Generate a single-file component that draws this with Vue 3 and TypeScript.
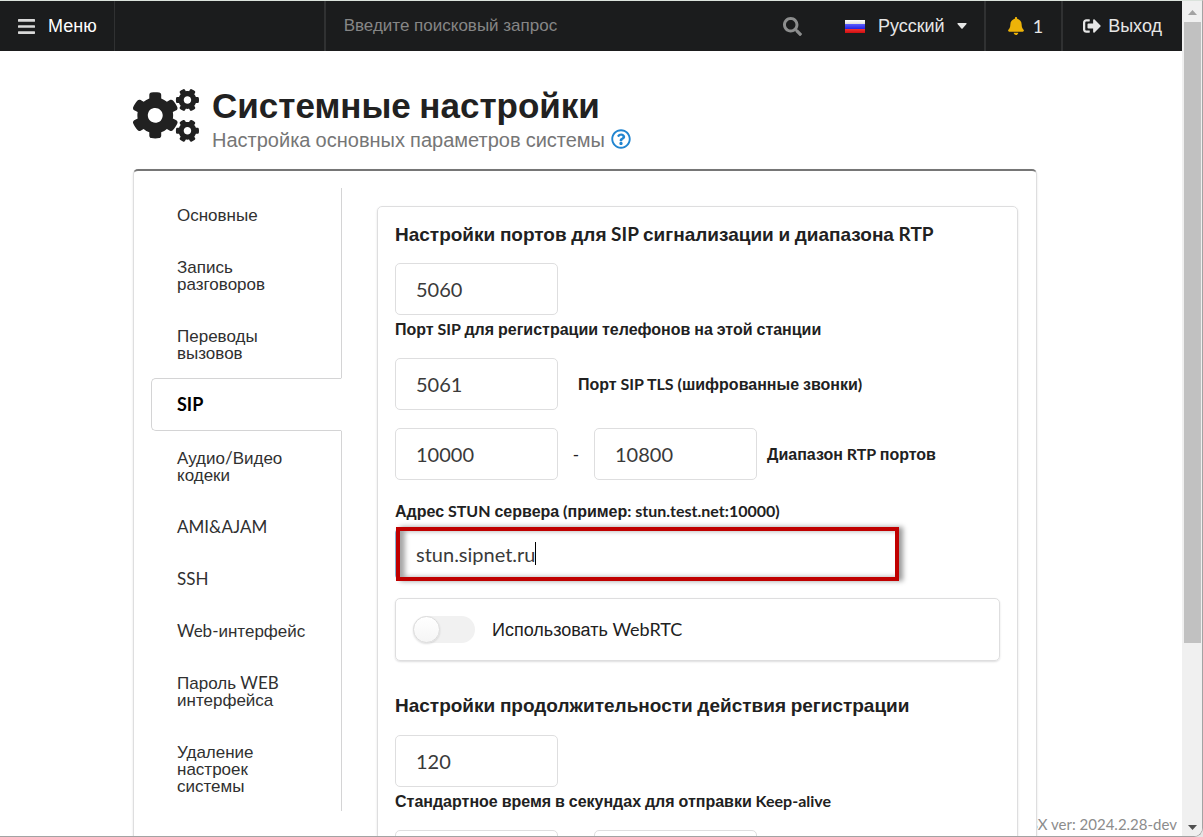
<script setup lang="ts">
import { h, ref } from 'vue'

interface Tab {
  id: string
  title: string
}

const tabs: Tab[] = [
  { id: 'general', title: 'Основные' },
  { id: 'recording', title: 'Запись разговоров' },
  { id: 'transfers', title: 'Переводы вызовов' },
  { id: 'sip', title: 'SIP' },
  { id: 'codecs', title: 'Аудио/Видео кодеки' },
  { id: 'ami', title: 'AMI&AJAM' },
  { id: 'ssh', title: 'SSH' },
  { id: 'web', title: 'Web-интерфейс' },
  { id: 'password', title: 'Пароль WEB интерфейса' },
  { id: 'reset', title: 'Удаление настроек системы' },
]

const activeTab = ref('sip')
const query = ref('')
const sipPort = ref('5060')
const tlsPort = ref('5061')
const rtpFrom = ref('10000')
const rtpTo = ref('10800')
const stun = ref('stun.sipnet.ru')
const useWebRtc = ref(false)
const keepAlive = ref('120')
const minExpiry = ref('')
const maxExpiry = ref('')

// Cyrillic runs use the sans family, everything else stays in Lato.
const Mixed = (props: { text: string }) =>
  props.text
    .split(/([А-Яа-яЁё]+)/)
    .filter((part) => part.length > 0)
    .map((part) => (/[А-Яа-яЁё]/.test(part) ? h('span', { class: 'cyr' }, part) : part))
Mixed.props = ['text']
</script>

<template>
  <div class="window">
    <div class="viewport">
      <header class="topbar">
        <button class="bar-item menu" type="button">
          <svg class="icon-bars" viewBox="0 0 448 392" aria-hidden="true">
            <rect y="0" width="448" height="72" rx="16" />
            <rect y="160" width="448" height="72" rx="16" />
            <rect y="320" width="448" height="72" rx="16" />
          </svg>
          <Mixed text="Меню" />
        </button>
        <div class="logo-slot"></div>
        <form class="search" role="search" @submit.prevent>
          <input v-model="query" type="text" aria-label="Поиск" placeholder="Введите поисковый запрос" />
          <button type="submit" aria-label="Найти">
            <svg viewBox="0 0 512 512" aria-hidden="true"><path d="M505 442.700L405.300 343c-4.500-4.500-10.600-7-17-7H372c27.600-35.300 44-79.700 44-128C416 93.100 322.900 0 208 0S0 93.100 0 208s93.100 208 208 208c48.300 0 92.700-16.400 128-44v16.300c0 6.400 2.500 12.500 7 17l99.700 99.700c9.400 9.400 24.600 9.400 33.900 0l28.300-28.300c9.400-9.400 9.400-24.600.1-34zM208 336c-70.700 0-128-57.200-128-128 0-70.700 57.200-128 128-128 70.700 0 128 57.200 128 128 0 70.700-57.200 128-128 128z" /></svg>
          </button>
        </form>
        <button class="bar-item language" type="button">
          <svg class="flag" viewBox="0 0 20 13" aria-hidden="true">
            <defs>
              <linearGradient id="flag-white" x1="0" y1="0" x2="0" y2="1"><stop offset="0" stop-color="#fff" /><stop offset="1" stop-color="#dcdcdc" /></linearGradient>
              <linearGradient id="flag-blue" x1="0" y1="0" x2="0" y2="1"><stop offset="0" stop-color="#5c5cff" /><stop offset="1" stop-color="#2222e0" /></linearGradient>
              <linearGradient id="flag-red" x1="0" y1="0" x2="0" y2="1"><stop offset="0" stop-color="#f43030" /><stop offset="1" stop-color="#cc0f10" /></linearGradient>
            </defs>
            <rect width="20" height="4" fill="url(#flag-white)" />
            <rect y="4" width="20" height="5" fill="url(#flag-blue)" />
            <rect y="9" width="20" height="4" fill="url(#flag-red)" />
          </svg>
          <Mixed text="Русский" />
          <svg class="caret-down" viewBox="0 0 10 6" aria-hidden="true"><path d="M1 0h8q1 0 .5 1L5.600 5.500q-.6.6-1.200 0L.5 1Q0 0 1 0z" /></svg>
        </button>
        <button class="bar-item alerts" type="button">
          <svg class="bell" viewBox="0 0 448 512" aria-hidden="true"><path d="M224 512c35.320 0 63.970-28.650 63.970-64H160.030c0 35.350 28.650 64 63.970 64zm215.390-149.710c-19.320-20.760-55.470-51.990-55.470-154.290 0-77.700-54.480-139.900-127.940-155.160V32c0-17.670-14.320-32-31.980-32s-31.980 14.330-31.980 32v20.840C118.560 68.100 64.080 130.300 64.080 208c0 102.300-36.150 133.530-55.470 154.290-6 6.450-8.660 14.160-8.610 21.710.11 16.400 12.980 32 32.100 32h383.800c19.120 0 32-15.600 32.100-32 .05-7.550-2.610-15.270-8.610-21.710z" /></svg>
          <span>1</span>
        </button>
        <a class="bar-item logout" href="#logout">
          <svg class="sign-out" viewBox="0 0 512 512" aria-hidden="true"><path d="M497 273L329 441c-15 15-41 4.500-41-17v-96H152c-13.300 0-24-10.700-24-24v-96c0-13.300 10.700-24 24-24h136V88c0-21.400 25.900-32 41-17l168 168c9.300 9.400 9.300 24.600 0 34zM192 436v-40c0-6.600-5.400-12-12-12H96c-17.700 0-32-14.300-32-32V160c0-17.700 14.300-32 32-32h84c6.600 0 12-5.400 12-12V76c0-6.600-5.400-12-12-12H96c-53 0-96 43-96 96v192c0 53 43 96 96 96h84c6.600 0 12-5.400 12-12z" /></svg>
          <Mixed text="Выход" />
        </a>
      </header>

      <main class="page">
        <div class="container">
          <div class="page-head">
            <svg class="cogs" viewBox="0 0 640 512" aria-hidden="true"><path d="M512.1 191l-8.200 14.300c-3 5.300-9.400 7.500-15.100 5.400-11.800-4.400-22.600-10.700-32.100-18.600-4.600-3.800-5.800-10.500-2.800-15.700l8.200-14.300c-6.900-8-12.300-17.300-15.900-27.400h-16.500c-6 0-11.200-4.300-12.200-10.300-2-12-2.100-24.600 0-37.100 1-6 6.200-10.400 12.200-10.400h16.500c3.600-10.100 9-19.400 15.900-27.400l-8.200-14.300c-3-5.200-1.900-11.900 2.800-15.700 9.500-7.900 20.400-14.200 32.100-18.600 5.700-2.100 12.100.1 15.100 5.400l8.200 14.300c10.500-1.900 21.200-1.900 31.700 0L552 6.300c3-5.300 9.400-7.500 15.100-5.400 11.800 4.400 22.600 10.700 32.100 18.600 4.600 3.800 5.800 10.500 2.800 15.700l-8.200 14.300c6.900 8 12.300 17.300 15.900 27.400h16.500c6 0 11.200 4.300 12.200 10.300 2 12 2.100 24.600 0 37.100-1 6-6.200 10.400-12.200 10.400h-16.500c-3.600 10.100-9 19.400-15.900 27.400l8.200 14.300c3 5.200 1.900 11.900-2.800 15.700-9.500 7.900-20.400 14.200-32.100 18.600-5.700 2.100-12.100-.1-15.100-5.400l-8.200-14.300c-10.400 1.900-21.200 1.900-31.700 0zm-10.500-58.800c38.500 29.600 82.400-14.300 52.800-52.800-38.500-29.700-82.400 14.300-52.800 52.800zM386.300 286.100l33.700 16.800c10.100 5.800 14.500 18.100 10.500 29.100-8.900 24.200-26.400 46.400-42.600 65.800-7.400 8.900-20.200 11.100-30.300 5.300l-29.100-16.800c-16 13.700-34.600 24.600-54.900 31.700v33.600c0 11.600-8.300 21.600-19.700 23.600-24.600 4.200-50.400 4.400-75.900 0-11.500-2-20-11.900-20-23.600V418c-20.300-7.200-38.900-18-54.900-31.700L74 403c-10 5.800-22.900 3.600-30.300-5.300-16.200-19.400-33.300-41.600-42.200-65.700-4-10.900.4-23.200 10.500-29.100l33.300-16.800c-3.900-20.900-3.900-42.400 0-63.400L12 205.800c-10.100-5.800-14.600-18.100-10.500-29 8.900-24.200 26-46.400 42.200-65.800 7.400-8.900 20.200-11.100 30.300-5.300l29.100 16.800c16-13.700 34.600-24.600 54.900-31.700V57.100c0-11.500 8.200-21.500 19.600-23.500 24.600-4.200 50.500-4.400 76-.1 11.500 2 20 11.900 20 23.600v33.600c20.300 7.200 38.900 18 54.900 31.700l29.100-16.800c10-5.800 22.900-3.600 30.300 5.300 16.200 19.400 33.200 41.600 42.100 65.800 4 10.900.1 23.200-10 29.100l-33.700 16.800c3.900 21 3.900 42.500 0 63.500zm-117.600 21.100c59.200-77-28.700-164.900-105.700-105.700-59.200 77 28.700 164.900 105.700 105.700zm243.400 182.700l-8.200 14.300c-3 5.300-9.400 7.500-15.100 5.400-11.800-4.400-22.600-10.700-32.100-18.600-4.600-3.800-5.800-10.500-2.800-15.700l8.200-14.300c-6.900-8-12.300-17.300-15.900-27.400h-16.500c-6 0-11.200-4.300-12.200-10.300-2-12-2.100-24.600 0-37.100 1-6 6.200-10.400 12.200-10.400h16.500c3.600-10.100 9-19.400 15.900-27.400l-8.200-14.300c-3-5.200-1.900-11.900 2.800-15.700 9.500-7.900 20.400-14.200 32.100-18.600 5.700-2.100 12.100.1 15.100 5.400l8.200 14.300c10.500-1.900 21.200-1.900 31.700 0l8.200-14.300c3-5.300 9.400-7.500 15.100-5.400 11.800 4.400 22.600 10.700 32.100 18.600 4.600 3.800 5.800 10.500 2.800 15.700l-8.200 14.300c6.900 8 12.300 17.300 15.900 27.400h16.500c6 0 11.200 4.300 12.200 10.300 2 12 2.100 24.600 0 37.100-1 6-6.200 10.400-12.200 10.400h-16.500c-3.600 10.100-9 19.400-15.900 27.400l8.200 14.300c3 5.200 1.900 11.900-2.800 15.700-9.500 7.900-20.400 14.200-32.100 18.600-5.700 2.100-12.100-.1-15.100-5.400l-8.200-14.300c-10.400 1.900-21.200 1.900-31.700 0zM501.600 431c38.500 29.600 82.400-14.300 52.800-52.800-38.500-29.600-82.400 14.300-52.800 52.800z" /></svg>
            <div>
              <h1><Mixed text="Системные настройки" /></h1>
              <p class="subtitle">
                <span><Mixed text="Настройка основных параметров системы" /></span>
                <a href="#help" aria-label="Справка">
                  <svg viewBox="0 0 512 512" aria-hidden="true"><path d="M256 8C119.043 8 8 119.083 8 256c0 136.997 111.043 248 248 248s248-111.003 248-248C504 119.083 392.957 8 256 8zm0 448c-110.532 0-200-89.431-200-200 0-110.495 89.472-200 200-200 110.491 0 200 89.471 200 200 0 110.530-89.431 200-200 200zm107.244-255.200c0 67.052-72.421 68.084-72.421 92.863V300c0 6.627-5.373 12-12 12h-45.647c-6.627 0-12-5.373-12-12v-8.659c0-35.745 27.100-50.034 47.579-61.516 17.561-9.845 28.324-16.541 28.324-29.579 0-17.246-21.999-28.693-39.784-28.693-23.189 0-33.894 10.977-48.942 29.969-4.057 5.120-11.460 6.071-16.666 2.124l-27.824-21.098c-5.107-3.872-6.251-11.066-2.644-16.363C184.846 131.491 214.940 112 261.794 112c49.071 0 101.450 38.304 101.450 88.800zM298 368c0 23.159-18.841 42-42 42s-42-18.841-42-42 18.841-42 42-42 42 18.841 42 42z" /></svg>
                </a>
              </p>
            </div>
          </div>

          <div class="panel">
            <nav class="tabs">
              <a
                v-for="tab in tabs"
                :key="tab.id"
                :href="'#' + tab.id"
                class="tab"
                :class="{ active: tab.id === activeTab }"
                @click.prevent="activeTab = tab.id"
              ><Mixed :text="tab.title" /></a>
            </nav>

            <form class="settings" @submit.prevent>
              <h2><Mixed text="Настройки портов для SIP сигнализации и диапазона RTP" /></h2>
              <div class="field">
                <input id="sip-port" v-model="sipPort" class="text-box short" type="text" />
                <label for="sip-port"><Mixed text="Порт SIP для регистрации телефонов на этой станции" /></label>
              </div>
              <div class="row tls">
                <input id="tls-port" v-model="tlsPort" class="text-box short" type="text" />
                <label for="tls-port"><Mixed text="Порт SIP TLS (шифрованные звонки)" /></label>
              </div>
              <div class="row range">
                <input id="rtp-from" v-model="rtpFrom" class="text-box short" type="text" aria-label="Начало диапазона" />
                <span class="dash">-</span>
                <input id="rtp-to" v-model="rtpTo" class="text-box short" type="text" />
                <label for="rtp-to"><Mixed text="Диапазон RTP портов" /></label>
              </div>
              <div class="stun">
                <label for="stun"><Mixed text="Адрес STUN сервера (пример: stun.test.net:10000)" /></label>
                <div class="highlight">
                  <input id="stun" v-model="stun" class="text-box" type="text" />
                  <span class="cursor"></span>
                </div>
              </div>
              <div class="toggle-box">
                <input id="webrtc" v-model="useWebRtc" class="toggle" type="checkbox" />
                <label for="webrtc"><Mixed text="Использовать WebRTC" /></label>
              </div>
              <h2 class="second"><Mixed text="Настройки продолжительности действия регистрации" /></h2>
              <div class="field">
                <input id="keep-alive" v-model="keepAlive" class="text-box short" type="text" />
                <label for="keep-alive"><Mixed text="Стандартное время в секундах для отправки Keep-alive" /></label>
              </div>
              <div class="row range">
                <input v-model="minExpiry" class="text-box short" type="text" aria-label="Минимум" />
                <span class="dash"></span>
                <input v-model="maxExpiry" class="text-box short" type="text" aria-label="Максимум" />
              </div>
            </form>
          </div>
        </div>
        <footer class="version">PBX ver: 2024.2.28-dev</footer>
      </main>
    </div>

    <div class="scrollbar" aria-hidden="true">
      <svg class="arrow up" viewBox="0 0 9 5"><path d="M0 5L4.500 0 9 5z" /></svg>
      <div class="track"><div class="thumb"></div></div>
      <svg class="arrow down" viewBox="0 0 9 5"><path d="M0 0h9L4.500 5z" /></svg>
    </div>
  </div>
</template>

<style>
body {
  background: #e4e4e4;
}
.cyr {
  font-family: "Liberation Sans", Arial, sans-serif;
  line-height: 0;
}
</style>

<style scoped>
.window,
.window * {
  box-sizing: border-box;
}
.window {
  display: flex;
  height: 100vh;
  overflow: hidden;
  background: #fff;
  border-top: 1px solid #dbe3dc;
  border-right: 1px solid #a3a3a3;
  border-bottom: 1px solid #a3a3a3;
  border-radius: 0 0 9px 0;
  font-family: Lato, "Liberation Sans", sans-serif;
  font-size: 17px;
  color: #212121;
}
.viewport {
  flex: 1;
  min-width: 0;
  display: flex;
  flex-direction: column;
}
button {
  font: inherit;
  border: 0;
  background: none;
  padding: 0;
  cursor: pointer;
}
svg {
  fill: currentColor;
  flex: none;
}

/* top bar */
.topbar {
  flex: none;
  display: flex;
  height: 50px;
  background: #1b1c1d;
  color: #e6e6e6;
  font-size: 18px;
}
.bar-item {
  display: flex;
  align-items: center;
  color: inherit;
  text-decoration: none;
  white-space: nowrap;
}
.menu {
  padding: 0 17px 0 18px;
  gap: 13px;
  color: #fff;
  border-right: 1px solid #303132;
}
.icon-bars {
  width: 17px;
  height: 15px;
  color: #d9d9d9;
}
.logo-slot {
  width: 211px;
  border-right: 2px solid #303132;
}
.search {
  flex: 1;
  min-width: 0;
  display: flex;
  align-items: center;
}
.search input {
  flex: 1;
  min-width: 0;
  height: 100%;
  padding: 0 18px;
  border: 0;
  outline: 0;
  background: none;
  color: #fff;
  font: 17px "Liberation Sans", Arial, sans-serif;
}
.search input::placeholder {
  color: #868686;
  opacity: 1;
}
.search button {
  display: flex;
  color: #8d8e8e;
}
.search svg {
  width: 19px;
  height: 19px;
}
.language {
  padding: 0 17px 0 43px;
  border-right: 2px solid #303132;
}
.flag {
  width: 20px;
  height: 13px;
  margin-right: 13px;
}
.caret-down {
  width: 10px;
  height: 6px;
  margin-left: 12px;
}
.alerts {
  padding: 0 18px 0 22px;
  gap: 9px;
  border-right: 2px solid #303132;
}
.bell {
  width: 16px;
  height: 18px;
  color: #eeb308;
}
.logout {
  padding: 0 20px;
  gap: 7px;
}
.sign-out {
  width: 18px;
  height: 18px;
}

/* page */
.page {
  position: relative;
  flex: 1;
  min-height: 0;
  overflow: hidden;
  padding: 38px 145px 0 133px;
}
.container {
  position: relative;
  z-index: 1;
}
.page-head {
  display: flex;
  gap: 13px;
}
.cogs {
  width: 66px;
  height: 53px;
  color: #212121;
}
h1 {
  margin: 0;
  font-size: 35px;
  line-height: 30px;
}
.subtitle {
  display: flex;
  align-items: center;
  gap: 6px;
  margin: 8px 0 0;
  font-size: 20px;
  line-height: 24px;
  color: #767676;
}
.subtitle a {
  display: flex;
  color: #2185d0;
}
.subtitle svg {
  width: 20px;
  height: 20px;
}
.panel {
  display: flex;
  align-items: flex-start;
  gap: 35px;
  margin-top: 18px;
  padding: 17px 18px 17px 17px;
  background: #fff;
  border: 1px solid #dededf;
  border-top: 2px solid #767676;
  border-radius: 5px;
  box-shadow: 0 1px 2px rgba(34, 36, 38, 0.15);
}

/* side tabs */
.tabs {
  flex: none;
  display: flex;
  flex-direction: column;
  width: 191px;
}
.tab {
  padding: 18px 28px 17px 26px;
  border-right: 1px solid #d4d4d5;
  color: #303030;
  line-height: 17px;
  text-decoration: none;
}
.tab.active {
  padding: 17px 28px 17px 25px;
  border: 1px solid #d4d4d5;
  border-right-color: #fff;
  border-radius: 5px 0 0 5px;
  color: #000;
  font-size: 18px;
  font-weight: 700;
}

/* settings form */
.settings {
  flex: 1;
  min-width: 0;
  margin-top: 18px;
  padding: 17px;
  border: 1px solid #dededf;
  border-radius: 5px;
  box-shadow: 0 1px 2px rgba(34, 36, 38, 0.15);
}
h2 {
  margin: 0 0 19px;
  font-size: 19px;
  line-height: 20px;
}
h2.second {
  margin-top: 34px;
  margin-bottom: 20px;
}
label {
  font-size: 16px;
  line-height: 18px;
  font-weight: 700;
}
.field {
  display: flex;
  flex-direction: column;
  gap: 5px;
  margin-bottom: 20px;
}
.row {
  display: flex;
  align-items: center;
  margin-bottom: 18px;
}
.tls {
  gap: 20px;
}
.range {
  gap: 10px;
}
.dash {
  width: 16px;
  text-align: center;
}
.text-box {
  width: 100%;
  height: 52px;
  padding: 0 20px;
  border: 1px solid #dededf;
  border-radius: 5px;
  outline: 0;
  background: #fff;
  color: #3a3a3a;
  font: 20px Lato, "Liberation Sans", sans-serif;
}
.text-box.short {
  width: 163px;
}
.stun {
  display: flex;
  flex-direction: column;
  gap: 8px;
  margin-top: 22px;
}
.highlight {
  position: relative;
  width: 504px;
  max-width: 100%;
}
.highlight .text-box {
  display: block;
  border-color: #85b7d9;
}
.highlight::after {
  content: "";
  position: absolute;
  inset: -1px 0 -1px 1px;
  border: 4px solid #c00000;
  box-shadow: 4px 0 5px rgba(0, 0, 0, 0.4), inset 5px 0 5px rgba(0, 0, 0, 0.35);
  pointer-events: none;
}
.cursor {
  position: absolute;
  left: 140px;
  top: 14px;
  width: 1px;
  height: 23px;
  background: #000;
}
.toggle-box {
  display: flex;
  align-items: center;
  gap: 17px;
  margin-top: 18px;
  padding: 17px;
  border: 1px solid #dededf;
  border-radius: 5px;
  box-shadow: 0 1px 2px rgba(34, 36, 38, 0.15);
}
.toggle-box label {
  font-size: 18px;
  line-height: 27px;
  font-weight: 400;
}
.toggle {
  appearance: none;
  width: 62px;
  height: 27px;
  margin: 0;
  border-radius: 14px;
  background: #f1f1f1;
  cursor: pointer;
}
.toggle::before {
  content: "";
  display: block;
  box-sizing: border-box;
  width: 27px;
  height: 27px;
  border: 1px solid #dcdcdc;
  border-radius: 50%;
  background: linear-gradient(#fff, #f5f5f5);
  box-shadow: 0 1px 2px rgba(34, 36, 38, 0.15);
}
.toggle:checked {
  background: #2185d0;
}
.toggle:checked::before {
  margin-left: auto;
}

.version {
  position: absolute;
  right: 5px;
  bottom: 3px;
  font-size: 15px;
  line-height: 18px;
  color: #8c8c8c;
}

/* scroll bar */
.scrollbar {
  flex: none;
  display: flex;
  flex-direction: column;
  align-items: center;
  width: 20px;
  padding: 9px 1px 6px 2px;
  background: #f0f0f0;
}
.arrow {
  width: 9px;
  height: 5px;
}
.arrow.up {
  color: #a3a3a3;
}
.arrow.down {
  color: #505050;
}
.track {
  flex: 1;
  width: 100%;
  margin: 7px 0;
}
.thumb {
  height: 78%;
  background: #c1c1c1;
}
</style>
